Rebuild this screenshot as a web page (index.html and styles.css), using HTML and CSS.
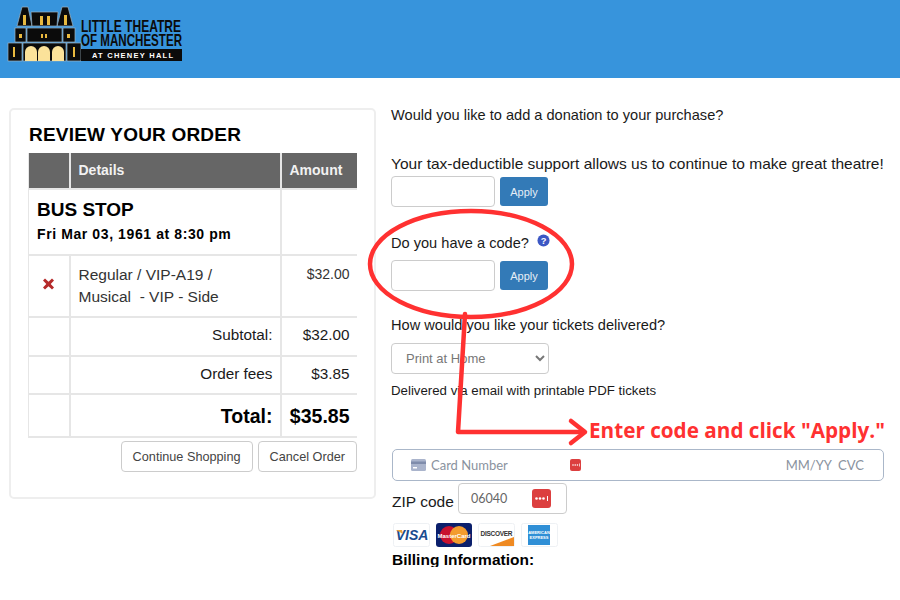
FILE: index.html
```html
<!DOCTYPE html>
<html lang="en">
<head>
  <meta charset="UTF-8">
  <title>Review Your Order</title>
  <link rel="stylesheet" href="styles.css">
</head>
<body>

  <header class="topbar">
    <svg class="logo" width="210" height="56" viewBox="0 0 210 56">
      <!-- building -->
      <g fill="#0b0b0b" stroke="#9fb4c4" stroke-width="0.7">
        <path d="M10 20 L15 1 H21 L25 20 Z"/>
        <path d="M50 20 L55 1 H61 L66 20 Z"/>
        <path d="M25 20 L24 6 H51 L50 20 Z"/>
        <rect x="8" y="22" width="11" height="14"/>
        <rect x="20" y="22" width="35" height="14"/>
        <rect x="56" y="22" width="12" height="14"/>
        <rect x="1" y="37" width="14" height="18"/>
        <rect x="16" y="37" width="43" height="18"/>
        <rect x="60" y="37" width="14" height="18"/>
      </g>
      <g fill="#e8b93f">
        <rect x="16" y="9" width="3" height="10"/>
        <rect x="33" y="10" width="3" height="9"/>
        <rect x="40" y="10" width="3" height="9"/>
        <rect x="57" y="9" width="3" height="10"/>
        <rect x="12" y="28" width="3" height="4"/>
        <rect x="34" y="28" width="2" height="4"/>
        <rect x="38" y="28" width="2" height="4"/>
        <rect x="60" y="28" width="3" height="4"/>
        <rect x="6" y="41" width="2" height="10"/>
        <rect x="66" y="41" width="2" height="10"/>
      </g>
      <g fill="#fbe29a">
        <path d="M18 55 V46 a6 6 0 0 1 12 0 V55 Z"/>
        <path d="M31 55 V46 a6 6 0 0 1 12 0 V55 Z"/>
        <path d="M45 55 V46 a6 6 0 0 1 12 0 V55 Z"/>
      </g>
      <text class="logo-title" x="74" y="26" textLength="100" lengthAdjust="spacingAndGlyphs">LITTLE THEATRE</text>
      <text class="logo-title" x="74" y="40" textLength="101" lengthAdjust="spacingAndGlyphs">OF MANCHESTER</text>
      <rect x="74" y="43" width="101" height="12" fill="#0b0b0b"/>
      <text class="logo-sub" x="85" y="52" textLength="81">AT CHENEY HALL</text>
    </svg>
  </header>

  <div class="content">
    <section class="order-card">
      <h2>REVIEW YOUR ORDER</h2>
      <table class="order-table">
        <colgroup>
          <col class="col-x">
          <col class="col-details">
          <col class="col-amount">
        </colgroup>
        <tr class="head-row">
          <th></th>
          <th>Details</th>
          <th>Amount</th>
        </tr>
        <tr class="show-row">
          <td colspan="2">
            <div class="show-name">BUS STOP</div>
            <div class="show-date">Fri Mar 03, 1961 at 8:30 pm</div>
          </td>
          <td></td>
        </tr>
        <tr class="ticket-row">
          <td class="remove">
            <svg width="13" height="12" viewBox="0 0 13 12"><path d="M1 2.500 L3 .5 L6.500 3.800 L10 .5 L12 2.500 L8.700 6 L12 9.500 L10 11.500 L6.500 8.200 L3 11.500 L1 9.500 L4.300 6 Z" fill="#b52a2a"/></svg>
          </td>
          <td>Regular / VIP-A19 /<br>Musical &nbsp;- VIP - Side</td>
          <td class="price">$32.00</td>
        </tr>
        <tr class="sub-row">
          <td></td>
          <td class="right">Subtotal:</td>
          <td class="right">$32.00</td>
        </tr>
        <tr class="fee-row">
          <td></td>
          <td class="right">Order fees</td>
          <td class="right">$3.85</td>
        </tr>
        <tr class="total-row">
          <td></td>
          <td class="right">Total:</td>
          <td class="right">$35.85</td>
        </tr>
      </table>
      <div class="order-btns">
        <button class="btn-default">Continue Shopping</button>
        <button class="btn-default">Cancel Order</button>
      </div>
    </section>

    <section class="checkout">
      <p class="q-donate">Would you like to add a donation to your purchase?</p>
      <p class="q-support">Your tax-deductible support allows us to continue to make great theatre!</p>
      <div class="apply-row">
        <input class="text-box" type="text">
        <button class="btn-apply">Apply</button>
      </div>
      <p class="q-code">Do you have a code?
        <svg class="help" width="13" height="13" viewBox="0 0 14 14"><circle cx="7" cy="7" r="6.500" fill="#3c57c4"/><text x="7" y="10.500" text-anchor="middle" class="help-mark">?</text></svg>
      </p>
      <div class="apply-row code-row">
        <input class="text-box" type="text">
        <button class="btn-apply">Apply</button>
      </div>
      <p class="q-delivery">How would you like your tickets delivered?</p>
      <select class="delivery">
        <option>Print at Home</option>
      </select>
      <p class="delivery-note">Delivered via email with printable PDF tickets</p>

      <div class="card-field">
        <svg width="15" height="12" viewBox="0 0 15 12"><rect width="15" height="12" rx="1.500" fill="#aab4cc"/><rect y="2.500" width="15" height="2.500" fill="#7f8cab"/><rect x="2" y="8" width="4" height="1.500" fill="#fff"/></svg>
        <span class="card-num">Card Number</span>
        <svg class="dots-small" width="11" height="12" viewBox="0 0 11 12"><rect width="11" height="12" rx="2" fill="#dc3f3f"/><g fill="#fff"><circle cx="3" cy="6" r=".8"/><circle cx="5.200" cy="6" r=".8"/><circle cx="7.400" cy="6" r=".8"/><rect x="9" y="4.500" width=".7" height="3"/></g></svg>
        <span class="card-exp">MM/YY&nbsp; CVC</span>
      </div>

      <div class="zip-row">
        <label>ZIP code</label>
        <div class="zip-box">
          <span>06040</span>
          <svg width="19" height="19" viewBox="0 0 19 19"><rect width="19" height="19" rx="3" fill="#dc3f3f"/><g fill="#fff"><circle cx="4.500" cy="9.500" r="1.300"/><circle cx="8" cy="9.500" r="1.300"/><circle cx="11.500" cy="9.500" r="1.300"/><rect x="15" y="7" width="1" height="5"/></g></svg>
        </div>
      </div>

      <div class="pay-logos">
        <svg class="pay" width="37" height="24" viewBox="0 0 37 24"><rect x=".5" y=".5" width="36" height="23" rx="2" fill="#fff" stroke="#eef1f4"/><text x="19" y="17" text-anchor="middle" class="visa-mark">VISA</text><path d="M3 7 H9 L10 11 Z" fill="#e9a23b"/></svg>
        <svg class="pay" width="36" height="24" viewBox="0 0 36 24"><rect width="36" height="24" rx="3" fill="#0b1f6b"/><circle cx="13" cy="12" r="9" fill="#c8102e"/><circle cx="23" cy="12" r="9" fill="#f39c2d"/><text x="18" y="14.500" text-anchor="middle" class="mc-mark">MasterCard</text></svg>
        <svg class="pay" width="37" height="24" viewBox="0 0 37 24"><rect x=".5" y=".5" width="36" height="23" rx="2" fill="#fff" stroke="#eef1f4"/><text x="18.500" y="12.500" text-anchor="middle" class="disc-mark" textLength="32">DISCOVER</text><path d="M12 23 L36 14 V23 Z" fill="#ef8a22"/></svg>
        <svg class="pay" width="37" height="24" viewBox="0 0 37 24"><rect x=".5" y=".5" width="36" height="23" rx="2" fill="#fff" stroke="#eef1f4"/><rect x="7" y="2" width="22" height="20" fill="#2f8fd6"/><text x="18" y="11" text-anchor="middle" class="amex-mark">AMERICAN</text><text x="18" y="16" text-anchor="middle" class="amex-mark">EXPRESS</text></svg>
      </div>
      <div class="billing-title">Billing Information:</div>
    </section>
  </div>

  <!-- red annotation drawn on top of the page -->
  <svg class="markup" width="900" height="600" viewBox="0 0 900 600">
    <g fill="none" stroke="#ff3131" stroke-width="4.500" stroke-linecap="round" stroke-linejoin="round">
      <ellipse cx="471" cy="264" rx="101" ry="53"/>
      <path d="M465 314 L458 432 L584 432"/>
      <path d="M571 421 L585 432 L571 443"/>
    </g>
  </svg>
  <div class="markup-note">Enter code and click "Apply."</div>

</body>
</html>
```

FILE: styles.css
```css
html, body {
  margin: 0;
  padding: 0;
  height: 600px;
  overflow: hidden;
}

body {
  position: relative;
  background: #fff;
  color: #1a1a1a;
  font-family: "Liberation Sans", Arial, sans-serif;
  font-size: 14.600px;
}

.topbar {
  height: 78px;
  background: #3794dc;
  padding: 6px 0 0 7px;
  box-sizing: border-box;
}

.logo {
  display: block;
}

.logo-title {
  font-family: "Liberation Sans Narrow", "Liberation Sans", sans-serif;
  font-weight: bold;
  font-size: 17px;
  fill: #0b0b0b;
}

.logo-sub {
  font-family: "Liberation Sans", sans-serif;
  font-weight: bold;
  font-size: 7.500px;
  fill: #fff;
}

.content {
  display: flex;
  align-items: flex-start;
  padding: 30px 0 0 9px;
}

/* left card */
.order-card {
  width: 367px;
  height: 391px;
  box-sizing: border-box;
  border: 2px solid #eee;
  border-radius: 5px;
  padding: 13px 17px 0 18px;
}

.order-card h2 {
  margin: 0 0 7px;
  font-size: 19px;
  line-height: 23px;
  letter-spacing: 0.2px;
  color: #000;
}

.order-table {
  width: 328px;
  border-collapse: collapse;
  table-layout: fixed;
  font-size: 15.300px;
  margin-left: -1px;
}

.col-x { width: 41px; }
.col-details { width: 211px; }
.col-amount { width: 76px; }

.order-table td,
.order-table th {
  border: 2px solid #e6e6e6;
  padding: 0 7px 0 8px;
}

.order-table tr:first-child th { border-top: 0; }
.order-table tr > :first-child { border-left: 1px solid #e6e6e6; }
.order-table tr > :last-child { border-right: 0; }

.head-row {
  height: 36px;
}

.head-row th {
  background: #666;
  color: #f2f2f2;
  text-align: left;
  font-size: 14px;
  padding-bottom: 2px;
}

.show-row { height: 66px; }

.show-name {
  font-size: 19px;
  font-weight: bold;
  line-height: 24px;
  color: #000;
}

.show-date {
  font-size: 14px;
  font-weight: bold;
  letter-spacing: 0.6px;
  line-height: 24px;
  color: #000;
}

.ticket-row { height: 62px; }
.ticket-row td { vertical-align: top; padding-top: 8px; line-height: 22px; color: #333; font-size: 15.500px; }
.ticket-row .remove { text-align: center; padding: 22px 0 0; }
.ticket-row .remove svg { display: block; margin: 0 auto; }
.ticket-row .price { font-size: 14px; text-align: right; line-height: 20px; }

.sub-row { height: 39px; }
.sub-row td { padding-bottom: 3px; }
.fee-row { height: 38px; }
.fee-row td { padding-bottom: 2px; }
.total-row { height: 43px; font-size: 19.500px; font-weight: bold; color: #000; }
.total-row td { padding-left: 0; padding-top: 2px; }

.right { text-align: right; }

.order-btns {
  display: flex;
  justify-content: flex-end;
  gap: 5px;
  margin: 3px 0 0 0;
}

.btn-default {
  height: 31px;
  padding: 0 11px;
  background: #fff;
  color: #444;
  border: 1px solid #ccc;
  border-radius: 4px;
  font-family: inherit;
  font-size: 12.700px;
}

/* right column */
.checkout {
  margin-left: 15px;
  width: 495px;
  margin-top: -2px;
}

.checkout p {
  margin: 0;
  line-height: 18px;
  white-space: nowrap;
}

.q-support { margin-top: 31px !important; font-size: 15.530px; }
.q-code { margin-top: 27px !important; }
.q-delivery { margin-top: 25px !important; }

.apply-row {
  display: flex;
  align-items: center;
  gap: 5px;
  margin-top: 3px;
}

.code-row { margin-top: 8px; }

.text-box {
  width: 104px;
  height: 31px;
  box-sizing: border-box;
  border: 1px solid #ccc;
  border-radius: 4px;
  background: #fff;
}

.btn-apply {
  width: 48px;
  height: 29px;
  background: #337ab7;
  color: #e6eef6;
  border: 0;
  border-radius: 3px;
  font-family: inherit;
  font-size: 11px;
  padding: 0;
}

.help {
  vertical-align: 1px;
  margin-left: 4px;
}

.help-mark {
  font-family: "Liberation Sans", sans-serif;
  font-size: 10px;
  font-weight: bold;
  fill: #fff;
}

.delivery {
  display: block;
  width: 158px;
  height: 31px;
  margin-top: 9px;
  padding-left: 10px;
  background: #fff;
  color: #777;
  border: 1px solid #ccc;
  border-radius: 4px;
  font-family: inherit;
  font-size: 13px;
}

.delivery-note {
  margin-top: 8px !important;
  font-size: 13.250px;
}

.card-field {
  display: flex;
  align-items: center;
  box-sizing: border-box;
  width: 492px;
  height: 32px;
  margin: 49px 0 0 1px;
  padding: 0 19px 0 18px;
  border: 1px solid #aab7c9;
  border-radius: 5px;
  font-family: Lato, sans-serif;
  font-size: 13px;
  color: #8a929e;
}

.card-num {
  margin-left: 5px;
  width: 139px;
}

.card-exp {
  margin-left: auto;
}

.zip-row {
  display: flex;
  align-items: center;
  margin: 2px 0 0 1px;
}

.zip-row label {
  font-size: 15.500px;
  width: 66px;
  padding-top: 6px;
}

.zip-box {
  display: flex;
  align-items: center;
  justify-content: space-between;
  box-sizing: border-box;
  width: 109px;
  height: 31px;
  padding: 0 15px 0 12px;
  border: 1px solid #ccc;
  border-radius: 4px;
  font-family: Lato, sans-serif;
  font-size: 12.500px;
  color: #666;
}

.pay-logos {
  display: flex;
  gap: 6px;
  margin: 9px 0 0 2px;
}

.visa-mark {
  font-family: "Liberation Sans", sans-serif;
  font-size: 14px;
  font-weight: bold;
  font-style: italic;
  fill: #1a4c8f;
}

.mc-mark {
  font-family: "Liberation Sans", sans-serif;
  font-size: 6px;
  font-weight: bold;
  fill: #fff;
}

.disc-mark {
  font-family: "Liberation Sans", sans-serif;
  font-size: 6.500px;
  font-weight: bold;
  fill: #333;
}

.amex-mark {
  font-family: "Liberation Sans", sans-serif;
  font-size: 4px;
  font-weight: bold;
  fill: #fff;
}

.billing-title {
  height: 15px;
  margin: 5px 0 0 1px;
  overflow: hidden;
  font-size: 15.500px;
  font-weight: bold;
  line-height: 16px;
  color: #000;
}

/* annotation layer */
.markup {
  position: absolute;
  left: 0;
  top: 0;
  pointer-events: none;
}

.markup-note {
  position: absolute;
  left: 589px;
  top: 415px;
  font-family: "Open Sans", sans-serif;
  font-size: 20.700px;
  font-weight: 700;
  line-height: 30px;
  color: #ff3131;
  white-space: nowrap;
}
```
